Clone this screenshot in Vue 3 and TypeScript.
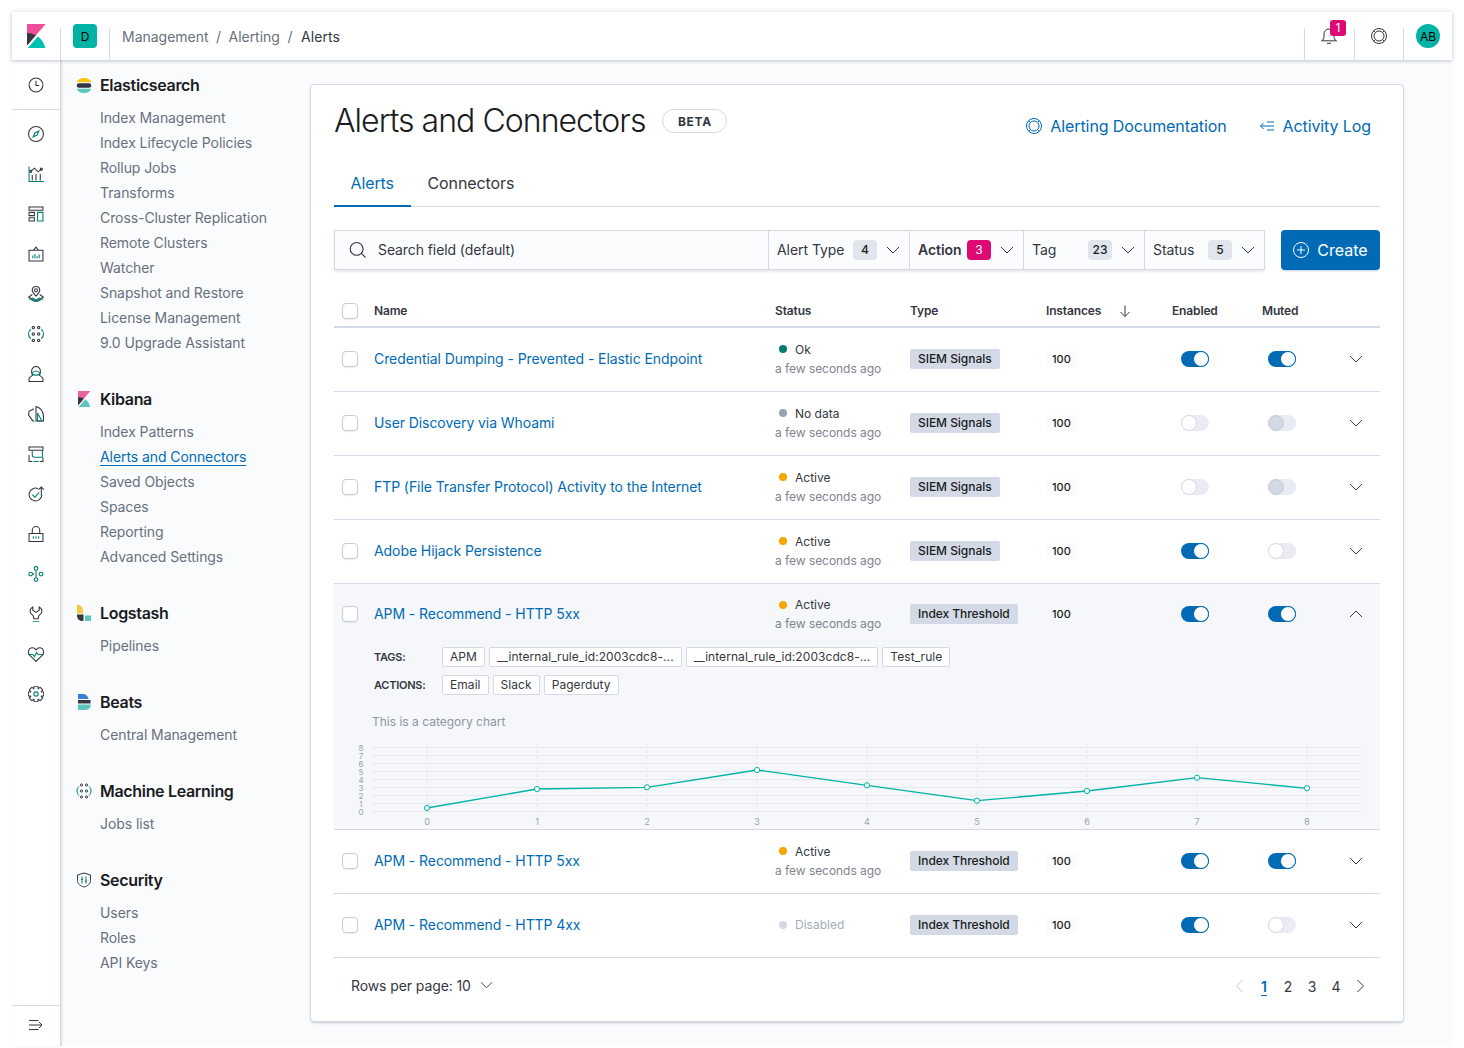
<script setup lang="ts">
interface Ico { d: string; t: string; f?: string }
const c = (x: number, y: number, r: number) => `M${x - r} ${y}a${r} ${r} 0 1 0 ${2 * r} 0a${r} ${r} 0 1 0 ${-2 * r} 0z`
const gear = () => {
  let s = ''
  const n = 8
  for (let i = 0; i < n; i++) {
    const a = (i / n) * Math.PI * 2
    const pts: [number, number][] = [[5.6, -0.42], [7.4, -0.22], [7.4, 0.22], [5.6, 0.42]]
    pts.forEach(([r, o], k) => {
      s += `${k === 0 && i === 0 ? 'M' : 'L'}${(8 + r * Math.cos(a + o)).toFixed(2)} ${(8 + r * Math.sin(a + o)).toFixed(2)}`
    })
  }
  return s + 'z'
}
const mlDots = [[5.5, 2], [10.5, 2], [5.5, 8], [10.5, 8], [5.5, 14], [10.5, 14]].map(([x, y]) => c(x, y, 1.1)).join('')
const mlArcs = 'M3 3.500C1.500 5 1 6.500 1 8s.5 3 2 4.500M13 3.500C14.500 5 15 6.500 15 8s-.5 3-2 4.500'
const ring = c(8, 8, 7.5) + c(8, 8, 5) + 'M2.700 2.700l1.800 1.800M13.300 2.700l-1.800 1.800M2.700 13.300l1.800-1.800M13.300 13.300l-1.800-1.800'
const apps: Ico[] = [
  { d: c(8, 8, 7), t: 'M10.700 5.300L9 9 5.300 10.700 7 7z' },
  { d: 'M4.500 14V9M8 14V8M12 14V8M3 5.500l3.500-3 3.500 3.500 3-2.500' + c(3, 5.5, 1) + c(13, 3.5, 1), t: 'M1.500 1v14h14' },
  { d: 'M1.500 1.500h13v3h-13zM1.500 6.500h5v3h-5zM1.500 11.500h5v3h-5z', t: 'M9.500 6.500h5v8h-5z' },
  { d: 'M1.500 4.500h13v10h-13zM5.500 4.500L8 1.500l2.500 3', t: 'M5 12V9.500M7 12V8M9 12V10M11 12V8.500' },
  { d: 'M8 1c2 0 3.500 1.500 3.500 3.500S8 10 8 10 4.500 6.500 4.500 4.500 6 1 8 1z' + c(8, 4.5, 1.4) + 'M4.500 8.500L1 11l7 3.500 7-3.500-3.500-2.500', t: 'M1.500 12.500L8 15.500l6.500-3M4 11.500L8 13.500l4-2' },
  { d: mlDots, t: mlArcs },
  { d: 'M1.500 15v-2.500c0-2 3-2.500 3.500-3.500C4 7.500 3.500 5 4.500 3a4 4 0 0 1 7 0c1 2 .5 4.500-.5 6 .5 1 3.500 1.500 3.500 3.500V15z', t: 'M4 7.500c2.500-3 5.500-3 8 0-2.500 2-5.500 2-8 0z' },
  { d: 'M6 3L1.500 5.500 1 9l4 5.500h1.500M8 1c4 1 6.500 4 7 8.500v5H8z', t: 'M9.500 7l4 7.500h-4z' },
  { d: 'M1.500 1.500h13v3h-13zM1.500 9V15h3M11.500 15h3V11.500', t: 'M4.500 4.500v4.500c0 1 .5 2 2 2h7.500V4.500M5.500 15h5' },
  { d: 'M10 3a6 6 0 1 0 3.500 6M13 9.500V1.500M10.500 4L13 1.500 15.500 4', t: 'M4.500 8.500l2.500 2.500 4-4.500' },
  { d: 'M1.500 7.500h13v7.500h-13zM4.500 7.500v-3a3.500 3.500 0 0 1 7 0v3', t: 'M5.500 10v2.500M8 10v2.500M10.500 10v2.500' },
  { d: 'M4.800 8h1.500', t: c(8, 2.8, 1.7) + c(12.8, 8, 1.7) + c(8, 13.2, 1.7) + c(3, 8, 1.7) + 'M8 4.500v7' },
  { d: 'M5 1.500v3l3 2 3-2v-3c2.500 1.500 3 3.500 2 5.500-.7 1.200-2 2-2.500 3l-.5 2.500H6L5.500 10C5 9 3.700 8.200 3 7 2 5 2.500 3 5 1.500z', t: 'M5 15.300h6' },
  { d: 'M8 15L2 9C0 6.500 1 2.800 4 2.200 5.700 1.900 7 2.700 8 4.200c1-1.500 2.300-2.300 4-2 3 .6 4 4.300 2 6.800z', t: 'M.5 8.500h4.500l1.500 2 2-4 1.500 2h5.500' },
  { d: gear(), t: c(8, 8, 2) },
]
const clock: Ico = { d: c(8, 8, 6.5) + 'M8 4v4.500h3', t: '' }
const menu: Ico = { d: 'M1 3.500h9.500M1 8h13M11 5l3 3-3 3M1 12.500h9.500', t: '' }
const mlIco: Ico = { d: mlDots, t: mlArcs }
const shield: Ico = { d: 'M8 1l6.500 2v5.500c0 3-2.500 5.500-6.500 6.500C4 14 1.500 11.500 1.500 8.500V3z', t: 'M6 4.500v7M10 4.500v7M5 7.500h2M9 9h2' }

const groups = [
  { title: 'Elasticsearch', icon: 'es', items: ['Index Management', 'Index Lifecycle Policies', 'Rollup Jobs', 'Transforms', 'Cross-Cluster Replication', 'Remote Clusters', 'Watcher', 'Snapshot and Restore', 'License Management', '9.0 Upgrade Assistant'] },
  { title: 'Kibana', icon: 'kb', items: ['Index Patterns', 'Alerts and Connectors', 'Saved Objects', 'Spaces', 'Reporting', 'Advanced Settings'] },
  { title: 'Logstash', icon: 'ls', items: ['Pipelines'] },
  { title: 'Beats', icon: 'bt', items: ['Central Management'] },
  { title: 'Machine Learning', icon: 'ml', items: ['Jobs list'] },
  { title: 'Security', icon: 'sc', items: ['Users', 'Roles', 'API Keys'] },
]
const filters = [
  { label: 'Alert Type', n: 4 },
  { label: 'Action', n: 3, on: true },
  { label: 'Tag', n: 23 },
  { label: 'Status', n: 5 },
]
interface Row { name: string; st: string; dot: string; type: string; en: string; mu: string; open?: boolean }
const rows: Row[] = [
  { name: 'Credential Dumping - Prevented - Elastic Endpoint', st: 'Ok', dot: 'ok', type: 'SIEM Signals', en: 'on', mu: 'on' },
  { name: 'User Discovery via Whoami', st: 'No data', dot: 'nd', type: 'SIEM Signals', en: 'off', mu: 'dis' },
  { name: 'FTP (File Transfer Protocol) Activity to the Internet', st: 'Active', dot: 'ac', type: 'SIEM Signals', en: 'off', mu: 'dis' },
  { name: 'Adobe Hijack Persistence', st: 'Active', dot: 'ac', type: 'SIEM Signals', en: 'on', mu: 'off' },
  { name: 'APM - Recommend - HTTP 5xx', st: 'Active', dot: 'ac', type: 'Index Threshold', en: 'on', mu: 'on', open: true },
  { name: 'APM - Recommend - HTTP 5xx', st: 'Active', dot: 'ac', type: 'Index Threshold', en: 'on', mu: 'on' },
  { name: 'APM - Recommend - HTTP 4xx', st: 'Disabled', dot: 'di', type: 'Index Threshold', en: 'on', mu: 'off' },
]
const tags = ['APM', '__internal_rule_id:2003cdc8-...', '__internal_rule_id:2003cdc8-...', 'Test_rule']
const actions = ['Email', 'Slack', 'Pagerduty']
const yl = [8, 7, 6, 5, 4, 3, 2, 1, 0]
const xs = [427, 537, 647, 757, 867, 977, 1087, 1197, 1307]
const ys = [808, 789, 787.3, 770, 785.3, 800.7, 791, 777.7, 788.3]
const linePts = xs.map((x, i) => `${x},${ys[i]}`).join(' ')
const chev = 'M1 4l6 6 6-6'
const kbPink = 'M4 0v28.789L28.935.017z'
const kbDark = 'M4 12v16.789l11.906-13.738A24.721 24.721 0 004 12'
const kbTeal = 'M18.479 16.664L6.268 30.754l-1.073 1.237h23.191c-1.252-6.292-4.883-11.719-9.908-15.327'
</script>

<template>
  <div class="page">
    <div class="win">
      <header class="top">
        <div class="logo">
          <svg width="24" height="24" viewBox="0 0 32 32"><path fill="#f04e98" :d="kbPink" /><path fill="#343741" :d="kbDark" /><path fill="#00bfb3" :d="kbTeal" /></svg>
        </div>
        <i class="sep"></i>
        <div class="space"><span class="tile">D</span></div>
        <i class="sep"></i>
        <nav class="crumbs">
          <span>Management</span><b>/</b><span>Alerting</span><b>/</b><span class="cur">Alerts</span>
        </nav>
        <i class="sep"></i>
        <div class="tbtn bell">
          <svg width="16" height="16" viewBox="0 0 16 16" fill="none" stroke="#343741"><path d="M.5 12.800c1.800-1 2.500-2 2.500-4.800V6a5 5 0 0 1 10 0v2c0 2.800.7 3.800 2.500 4.800zM6 15.300h4" /></svg>
          <span class="pill">1</span>
        </div>
        <i class="sep"></i>
        <div class="tbtn h">
          <svg width="16" height="16" viewBox="0 0 16 16" fill="none" stroke="#343741"><path :d="ring" /></svg>
        </div>
        <i class="sep"></i>
        <div class="tbtn a"><span class="avatar">AB</span></div>
      </header>

      <div class="body">
        <aside class="rail">
          <div class="recent">
            <svg width="16" height="16" viewBox="0.5 0.5 15 15" fill="none" stroke="#343741"><path :d="clock.d" /></svg>
          </div>
          <div class="apps">
            <div v-for="(a, i) in apps" :key="i" class="app">
              <svg width="16" height="16" viewBox="0.5 0.5 15 15" fill="none">
                <path :d="a.d" stroke="#343741" />
                <path :d="a.t" stroke="#017d73" />
              </svg>
            </div>
          </div>
          <div class="collapse">
            <svg width="16" height="16" viewBox="0 0 16 16" fill="none" stroke="#343741"><path :d="menu.d" /></svg>
          </div>
        </aside>

        <nav class="side">
          <section v-for="g in groups" :key="g.title" class="grp">
            <h3 class="gt">
              <span class="gi">
                <svg v-if="g.icon === 'es'" width="16" height="16" viewBox="0 0 16 16"><path fill="#fec514" d="M1 5.200C1.400 2.700 4 1 8 1s6.600 1.700 7 4.200z" /><path fill="#343741" d="M3 6.200h10a2.300 2.300 0 0 1 0 4.600H3a2.300 2.300 0 0 1 0-4.600z" /><path fill="#5cc5bc" d="M1 11.800h14C14.600 14.300 12 16 8 16s-6.600-1.700-7-4.200z" /></svg>
                <svg v-else-if="g.icon === 'kb'" width="16" height="16" viewBox="0 0 32 32"><path fill="#e7639f" :d="kbPink" /><path fill="#343741" :d="kbDark" /><path fill="#5cc5bc" :d="kbTeal" /></svg>
                <svg v-else-if="g.icon === 'ls'" width="16" height="16" viewBox="0 0 16 16"><path fill="#f6c945" d="M1 0h1.500C5 0 7 2.500 7 5.500V8.500H1z" /><path fill="#343741" d="M1 9.500h6.500V16H6c-2.800 0-5-2.500-5-5.500z" /><path fill="#5cc5bc" d="M9 10.500h6V16H9z" /></svg>
                <svg v-else-if="g.icon === 'bt'" width="16" height="16" viewBox="0 0 16 16"><path fill="#3a7fd5" d="M2 0h5c3 0 5 2 5.500 5H2z" /><path fill="#343741" d="M2 6h12.500v3.500H2z" /><path fill="#5cc5bc" d="M2 10.500h13c-.3 3-2.500 5.500-6 5.500H2z" /></svg>
                <svg v-else-if="g.icon === 'ml'" width="16" height="16" viewBox="0 0 16 16" fill="none"><path :d="mlIco.d" stroke="#343741" /><path :d="mlIco.t" stroke="#017d73" /></svg>
                <svg v-else width="16" height="16" viewBox="0 0 16 16" fill="none"><path :d="shield.d" stroke="#343741" /><path :d="shield.t" stroke="#017d73" /></svg>
              </span>
              {{ g.title }}
            </h3>
            <a v-for="it in g.items" :key="it" class="nl" :class="{ act: it === 'Alerts and Connectors' }">{{ it }}</a>
          </section>
        </nav>

        <main class="main">
          <div class="panel">
            <div class="head">
              <div class="tt">
                <h1>Alerts and Connectors</h1>
                <span class="beta">BETA</span>
              </div>
              <div class="links">
                <a class="lk">
                  <svg width="16" height="16" viewBox="0 0 16 16" fill="none" stroke="#006bb4"><path :d="ring" /></svg>
                  Alerting Documentation
                </a>
                <a class="lk">
                  <svg width="16" height="16" viewBox="0 0 16 16" fill="none" stroke="#006bb4"><path d="M1.500 8H15M4.500 5L1.500 8l3 3M8 4h7M8 12h7" /></svg>
                  Activity Log
                </a>
              </div>
            </div>

            <div class="tabs">
              <a class="tab on">Alerts</a>
              <a class="tab">Connectors</a>
            </div>

            <div class="bar">
              <div class="filters">
                <div class="search">
                  <svg width="18" height="18" viewBox="0 0 16 16" fill="none" stroke="#343741"><path d="M11 11l3.800 3.800M12.500 7a5.700 5.700 0 1 1-11.400 0 5.700 5.700 0 0 1 11.400 0z" /></svg>
                  <span>Search field (default)</span>
                </div>
                <div v-for="f in filters" :key="f.label" class="fc" :class="{ on: f.on }">
                  <span class="fl">{{ f.label }}</span>
                  <span class="cnt">{{ f.n }}</span>
                  <svg class="ch" width="14" height="14" viewBox="0 0 14 14" fill="none" stroke="#343741"><path :d="chev" /></svg>
                </div>
              </div>
              <button class="create" type="button">
                <svg width="16" height="16" viewBox="0 0 16 16" fill="none" stroke="#fff"><path d="M8 4v8M4 8h8" /><path :d="c(8, 8, 7.5)" /></svg>
                Create
              </button>
            </div>

            <div class="thead grid">
              <span class="cell"><span class="cb"></span></span>
              <span>Name</span>
              <span>Status</span>
              <span>Type</span>
              <span class="inst">Instances
                <svg width="14" height="14" viewBox="0 0 14 14" fill="none" stroke="#343741"><path d="M7 1.500v11M2.500 8L7 12.500 11.500 8" /></svg>
              </span>
              <span>Enabled</span>
              <span>Muted</span>
            </div>

            <div v-for="(r, i) in rows" :key="i" class="rowwrap" :class="{ open: r.open }">
              <div class="row grid">
                <span class="cell"><span class="cb"></span></span>
                <a class="name">{{ r.name }}</a>
                <div class="st">
                  <div class="s1" :class="r.dot"><i class="dot"></i>{{ r.st }}</div>
                  <div v-if="r.dot !== 'di'" class="s2">a few seconds ago</div>
                </div>
                <div><span class="ty">{{ r.type }}</span></div>
                <div><span class="num">100</span></div>
                <div class="en"><span class="tg" :class="r.en"><i></i></span></div>
                <div class="mu">
                  <span class="tg" :class="r.mu"><i></i></span>
                  <svg class="rch" width="14" height="14" viewBox="0 0 14 14" fill="none" stroke="#343741"><path :d="r.open ? 'M1 10l6-6 6 6' : chev" /></svg>
                </div>
              </div>
              <div v-if="r.open" class="detail">
                <div class="dl">
                  <span class="dk">TAGS:</span>
                  <span v-for="(t, k) in tags" :key="k" class="chip">{{ t }}</span>
                </div>
                <div class="dl">
                  <span class="dk">ACTIONS:</span>
                  <span v-for="t in actions" :key="t" class="chip">{{ t }}</span>
                </div>
                <p class="cap">This is a category chart</p>
                <svg class="chart" width="1046" height="86" viewBox="334 743 1046 86">
                  <line v-for="(v, k) in yl" :key="v" x1="372" x2="1362" :y1="747.5 + k * 8" :y2="747.5 + k * 8" stroke="#e6e9f0" />
                  <line v-for="x in xs" :key="x" :x1="x" :x2="x" y1="744" y2="811" stroke="#e4e7ee" stroke-dasharray="3 3" />
                  <text v-for="(v, k) in yl" :key="'y' + v" x="361" :y="750.5 + k * 8" class="ay" text-anchor="middle">{{ v }}</text>
                  <text v-for="(x, k) in xs" :key="'x' + x" :x="x" y="825" class="ax" text-anchor="middle">{{ k }}</text>
                  <polyline :points="linePts" fill="none" stroke="#00b3a4" stroke-width="1.3" />
                  <circle v-for="(x, k) in xs" :key="'p' + x" :cx="x" :cy="ys[k]" r="2.6" fill="#fff" stroke="#00b3a4" />
                </svg>
              </div>
            </div>

            <div class="foot">
              <span class="rpp">Rows per page: 10
                <svg width="13" height="14" viewBox="0 0 14 14" fill="none" stroke="#343741"><path :d="chev" /></svg>
              </span>
              <div class="pager">
                <span class="pg"><svg width="12" height="14" viewBox="0 0 12 14" fill="none" stroke="#c2c9d6"><path d="M8.500 1L2.500 7l6 6" /></svg></span>
                <span class="pg cur">1</span>
                <span class="pg">2</span>
                <span class="pg">3</span>
                <span class="pg">4</span>
                <span class="pg"><svg width="12" height="14" viewBox="0 0 12 14" fill="none" stroke="#343741"><path d="M3.500 1l6 6-6 6" /></svg></span>
              </div>
            </div>
          </div>
        </main>
      </div>
    </div>
  </div>
</template>

<style>
html, body { margin: 0; background: #fff; }
</style>

<style scoped>
* { box-sizing: border-box; }
.page { width: 1464px; height: 1048px; padding: 12px 12px 2px; font-family: Inter, "Liberation Sans", sans-serif; font-size: 14px; color: #343741; overflow: hidden; }
.win { width: 1440px; height: 1034px; display: flex; flex-direction: column; background: #fafbfd; }
.top { height: 48px; flex: none; display: flex; align-items: center; background: #fff; box-shadow: 0 1px 3px rgba(152,162,179,.55), 0 0 6px rgba(152,162,179,.18); position: relative; z-index: 2; }
.logo { width: 48px; display: flex; justify-content: center; }
.sep { width: 1px; height: 32px; align-self: flex-end; background: #d3dae6; flex: none; }
.space { width: 48px; display: flex; justify-content: center; }
.tile { width: 24px; height: 24px; border-radius: 4px; background: #00b3a4; color: #000; font-size: 12px; display: flex; align-items: center; justify-content: center; }
.crumbs { flex: 1; display: flex; align-items: center; padding-left: 12px; color: #69707d; letter-spacing: -.02px; }
.crumbs b { font-weight: 400; margin: 0 7.5px; }
.crumbs .cur { color: #343741; margin-left: 1px; letter-spacing: .1px; }
.tbtn { display: flex; align-items: center; justify-content: center; height: 48px; position: relative; }
.bell { width: 49px; }
.bell svg { margin-right: 2px; }
.h { width: 48px; }
.a { width: 48px; }
.pill { position: absolute; left: 25px; top: 8px; width: 16px; height: 16px; background: #dd0a73; color: #fff; border-radius: 3px; font-size: 12px; line-height: 16px; text-align: center; }
.avatar { width: 24px; height: 24px; border-radius: 50%; background: #00b3a4; color: #000; font-size: 12px; display: flex; align-items: center; justify-content: center; }
.body { flex: 1; display: flex; min-height: 0; }
.rail { width: 49px; flex: none; background: #fff; border-right: 1px solid #d3dae6; box-shadow: 1px 0 2px rgba(152,162,179,.3); display: flex; flex-direction: column; }
.recent { height: 50px; display: flex; align-items: center; justify-content: center; border-bottom: 1px solid #d3dae6; }
.apps { flex: 1; padding-top: 4px; display: flex; flex-direction: column; }
.app { height: 40px; display: flex; align-items: center; justify-content: center; }
.collapse { height: 41px; padding-bottom: 2px; border-top: 1px solid #d3dae6; display: flex; align-items: center; justify-content: center; }
.side { width: 249px; flex: none; padding: 13px 0 0 15px; }
.grp { margin-bottom: 32px; }
.gt { margin: 0 0 8px; height: 24px; display: flex; align-items: center; font-size: 16px; line-height: 24px; font-weight: 600; color: #1a1c21; letter-spacing: -.32px; }
.gi { width: 24px; height: 16px; display: block; flex: none; }
.gi svg { display: block; }
.nl { display: block; height: 25px; line-height: 25px; padding-left: 24px; color: #69707d; letter-spacing: -.08px; }
.nl.act { color: #006bb4; text-decoration: underline; text-underline-offset: 3px; }
.main { flex: 1; padding: 24px 48px 24px 0; }
.panel { width: 1094px; height: 938px; background: #fff; border: 1px solid #d3dae6; border-radius: 4px; box-shadow: 0 2px 2px -1px rgba(152,162,179,.45), 0 1px 5px -2px rgba(152,162,179,.4); padding: 16px 23px 0; }
.head { display: flex; justify-content: space-between; height: 40px; }
.tt { display: flex; align-items: center; }
h1 { margin: 0; font-size: 32px; line-height: 40px; font-weight: 300; color: #1a1c21; letter-spacing: -.96px; }
.beta { margin-left: 17px; width: 65px; height: 24px; border: 1px solid #d3dae6; border-radius: 12px; display: flex; align-items: center; justify-content: center; font-size: 12px; font-weight: 700; letter-spacing: .7px; color: #343741; }
.links { display: flex; gap: 32px; padding: 12px 9px 0 0; height: 40px; }
.lk { display: flex; align-items: center; gap: 8px; height: 26px; color: #006bb4; font-size: 16px; letter-spacing: -.1px; }
.tabs { margin-top: 18px; height: 48px; display: flex; border-bottom: 1px solid #d3dae6; }
.tab { height: 48px; padding: 0 17px 0 16.5px; display: flex; align-items: center; font-size: 16px; color: #343741; letter-spacing: -.1px; }
.tab.on { color: #006bb4; border-bottom: 2px solid #006bb4; padding-top: 1px; }
.bar { margin-top: 23px; display: flex; justify-content: space-between; height: 40px; }
.filters { width: 931px; height: 40px; display: grid; grid-template-columns: 435px 141px 114px 121px 120px; background: #fbfcfd; box-shadow: inset 0 0 0 1px #d3dae6, 0 2px 3px -1px rgba(152,162,179,.4); }
.search { display: flex; align-items: center; gap: 11px; padding: 0 0 1px 15px; color: #343741; letter-spacing: -.09px; border-right: 1px solid #d3dae6; }
.fc { display: flex; align-items: center; padding: 0 9px 1px 8px; border-right: 1px solid #d3dae6; border-bottom: 1px solid #d3dae6; border-top: 1px solid #d3dae6; }
.fl { letter-spacing: -.05px; }
.fc.on .fl { font-weight: 600; }
.cnt { margin-left: auto; width: 24px; height: 20px; border-radius: 4px; background: #e0e5ee; font-size: 12px; font-weight: 500; display: flex; align-items: center; justify-content: center; color: #1a1c21; }
.fc.on .cnt { background: #dd0a73; color: #fff; font-weight: 400; }
.ch { margin-left: 9px; flex: none; }
.create { width: 99px; height: 40px; border: 0; border-radius: 4px; background: #006bb4; color: #fff; font: inherit; font-size: 16px; display: flex; align-items: center; justify-content: center; gap: 8px; box-shadow: 0 2px 2px -1px rgba(152,162,179,.5); padding: 0; }
.grid { display: grid; grid-template-columns: 40px 401px 135px 136px 126px 90px 118px; align-items: center; }
.thead { margin-top: 26px; height: 32px; padding-bottom: 1px; border-bottom: 2px solid #d3dae6; font-size: 12px; font-weight: 600; color: #343741; letter-spacing: -.15px; }
.inst { display: flex; align-items: center; }
.inst svg { margin-left: 17px; }
.cell { display: flex; padding-left: 8px; }
.cb { width: 16px; height: 16px; border: 1px solid #c5ccd8; border-radius: 4px; background: #fff; display: block; box-shadow: 0 1px 1px rgba(152,162,179,.2); }
.rowwrap { border-bottom: 1px solid #d3dae6; }
.rowwrap.open { background: #f5f7fa; }
.row { height: 63px; padding-bottom: 2px; }
.open .row { height: 60px; padding-bottom: 0; }
.name { color: #006bb4; letter-spacing: -.08px; }
.open .name { margin-bottom: 2px; }
.st { font-size: 12px; line-height: 19px; }
.s1 { display: flex; align-items: center; padding-left: 4px; color: #343741; }
.dot { width: 8px; height: 8px; border-radius: 50%; margin-right: 8px; }
.ok .dot { background: #017d73; }
.nd .dot { background: #98a2b3; }
.ac .dot { background: #f5a700; }
.di .dot { background: #d3dae6; }
.di { color: #a4acba; }
.s2 { color: #69707d; opacity: .85; letter-spacing: -.05px; }
.ty { display: inline-block; height: 20px; line-height: 20px; padding: 0 8px; border-radius: 2px; background: #d3dae6; color: #1a1c21; font-size: 12px; font-weight: 500; letter-spacing: -.05px; }
.num { display: block; width: fit-content; height: 16px; line-height: 16px; padding: 0 6px; background: #fafbfd; font-size: 11px; font-weight: 500; color: #1a1c21; }
.open .num { background: transparent; }
.en { padding-left: 9px; display: flex; }
.mu { padding-left: 6px; display: flex; align-items: center; }
.rch { margin-left: 53px; }
.tg { width: 28px; height: 16px; border-radius: 8px; display: flex; background: #e9edf3; }
.tg i { width: 16px; height: 16px; border-radius: 50%; background: #fff; border: 1px solid #d3dae6; display: block; }
.tg.on { background: #006bb4; justify-content: flex-end; }
.tg.on i { border-color: #006bb4; }
.tg.dis i { background: #d3dae6; border-color: #c2c9d6; }
.detail { padding-top: 3px; }
.dl { display: flex; gap: 4px; height: 20px; margin-bottom: 8px; align-items: center; padding-left: 40px; }
.dk { width: 64px; font-size: 11px; font-weight: 600; color: #343741; letter-spacing: -.25px; }
.chip { height: 20px; line-height: 18px; padding: 0 7px; border: 1px solid #d3dae6; border-radius: 2px; background: #fff; font-size: 12px; color: #343741; letter-spacing: .06px; }
.cap { margin: 18px 0 12px 38px; font-size: 12px; line-height: 18px; color: #8d95a5; }
.chart { display: block; }
.ax { font-size: 9px; fill: #98a2b3; font-family: Inter, "Liberation Sans", sans-serif; }
.ay { font-size: 8px; fill: #98a2b3; font-family: Inter, "Liberation Sans", sans-serif; }
.foot { height: 56px; display: flex; align-items: center; justify-content: space-between; padding: 0 8px 0 17px; }
.rpp { display: flex; align-items: center; gap: 9px; letter-spacing: -.1px; margin-bottom: 2px; }
.pager { display: flex; }
.pg { width: 24px; display: flex; justify-content: center; align-items: center; height: 24px; }
.pg.cur { color: #006bb4; font-weight: 600; text-decoration: underline; text-underline-offset: 3px; }
</style>
